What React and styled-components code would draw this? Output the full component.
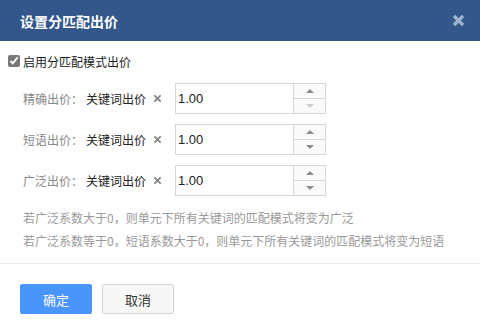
import React from "react";
import styled, { createGlobalStyle } from "styled-components";

const Global = createGlobalStyle`
  html, body { margin: 0; padding: 0; background: #fff; }
  body { font-family: "Noto Sans CJK SC", "Noto Sans", sans-serif; }
`;

const Dialog = styled.div`
  width: 480px;
  height: 334px;
  background: #fff;
  display: flex;
  flex-direction: column;
`;

const Header = styled.div`
  height: 41px;
  background: #33578a;
  display: flex;
  align-items: center;
  justify-content: space-between;
  padding: 0 15px 0 20px;
  box-sizing: border-box;
`;

const Title = styled.div`
  color: #fff;
  font-size: 14px;
  font-weight: bold;
`;

const Close = styled.div`
  width: 14px;
  height: 14px;
  display: flex;
  align-items: center;
  justify-content: center;
`;

const Body = styled.div`
  padding: 12px 0 0 0;
  display: flex;
  flex-direction: column;
`;

const CheckRow = styled.label`
  display: flex;
  align-items: center;
  padding-left: 8px;
  height: 16px;
  font-size: 12px;
  color: #222;
`;

const Check = styled.input`
  width: 12px;
  height: 12px;
  margin: 0 3px 0 0;
  accent-color: #777;
`;

const Rows = styled.div`
  display: flex;
  flex-direction: column;
  gap: 10px;
  margin-top: 14px;
  padding-left: 23px;
`;

const Row = styled.div`
  display: flex;
  align-items: center;
  height: 31px;
`;

const Label = styled.span`
  font-size: 12px;
  color: #888;
  width: 63px;
  flex-shrink: 0;
  white-space: nowrap;
`;

const Keyword = styled.span`
  font-size: 12px;
  color: #222;
  white-space: nowrap;
`;

const Times = styled.span`
  width: 29px;
  display: flex;
  justify-content: flex-start;
  padding-left: 7px;
  box-sizing: border-box;
`;

const InputBox = styled.div`
  display: flex;
  width: 151px;
  height: 31px;
  border: 1px solid #d6d6d6;
  box-sizing: border-box;
`;

const Value = styled.div`
  flex: 1;
  font-family: "Liberation Sans", Arial, sans-serif;
  font-size: 13px;
  color: #222;
  display: flex;
  align-items: center;
  padding-left: 2px;
`;

const Spinner = styled.div`
  width: 31px;
  border-left: 1px solid #d6d6d6;
  display: flex;
  flex-direction: column;
  background: #fafafa;
`;

const SpinBtn = styled.div`
  flex: 1;
  display: flex;
  align-items: center;
  justify-content: center;
  & + & { border-top: 1px solid #d6d6d6; }
`;

const Tri = styled.div`
  width: 0;
  height: 0;
  border-left: 4px solid transparent;
  border-right: 4px solid transparent;
  ${(p) =>
    p.$up
      ? `border-bottom: 4px solid ${p.$disabled ? "#ccc" : "#8a8a8a"};`
      : `border-top: 4px solid ${p.$disabled ? "#ccc" : "#8a8a8a"};`}
`;

const Notes = styled.div`
  margin-top: 10px;
  padding-left: 23px;
  font-size: 12px;
  color: #999;
  line-height: 23px;
`;

const Divider = styled.div`
  height: 1px;
  background: #eaeaea;
  margin-top: 11px;
`;

const Footer = styled.div`
  display: flex;
  gap: 10px;
  padding: 20px 0 0 20px;
`;

const Button = styled.button`
  width: 72px;
  height: 30px;
  border-radius: 2px;
  font-family: "Noto Sans CJK SC", sans-serif;
  font-size: 13px;
  box-sizing: border-box;
  cursor: pointer;
  border: 1px solid ${(p) => (p.$primary ? "#4a95fc" : "#d4d4d4")};
  background: ${(p) => (p.$primary ? "#4a95fc" : "#f7f7f7")};
  color: ${(p) => (p.$primary ? "#fff" : "#333")};
`;

const X = ({ color, size = 10, w = 2.2 }) => (
  <svg width={size} height={size} viewBox="0 0 10 10">
    <path d="M1.5 1.5 L8.5 8.5 M8.5 1.5 L1.5 8.5" stroke={color} strokeWidth={w} />
  </svg>
);

const rows = [
  { label: "精确出价：", upDisabled: false, downDisabled: true },
  { label: "短语出价：", upDisabled: false, downDisabled: false },
  { label: "广泛出价：", upDisabled: false, downDisabled: false },
];

export default function App() {
  return (
    <>
      <Global />
      <Dialog>
        <Header>
          <Title>设置分匹配出价</Title>
          <Close>
            <X color="#9db2cf" size={13} w={2.6} />
          </Close>
        </Header>
        <Body>
          <CheckRow>
            <Check type="checkbox" defaultChecked />
            启用分匹配模式出价
          </CheckRow>
          <Rows>
            {rows.map((r) => (
              <Row key={r.label}>
                <Label>{r.label}</Label>
                <Keyword>关键词出价</Keyword>
                <Times>
                  <X color="#858585" size={9} w={2} />
                </Times>
                <InputBox>
                  <Value>1.00</Value>
                  <Spinner>
                    <SpinBtn>
                      <Tri $up $disabled={r.upDisabled} />
                    </SpinBtn>
                    <SpinBtn>
                      <Tri $disabled={r.downDisabled} />
                    </SpinBtn>
                  </Spinner>
                </InputBox>
              </Row>
            ))}
          </Rows>
          <Notes>
            若广泛系数大于0，则单元下所有关键词的匹配模式将变为广泛
            <br />
            若广泛系数等于0，短语系数大于0，则单元下所有关键词的匹配模式将变为短语
          </Notes>
          <Divider />
          <Footer>
            <Button $primary>确定</Button>
            <Button>取消</Button>
          </Footer>
        </Body>
      </Dialog>
    </>
  );
}
